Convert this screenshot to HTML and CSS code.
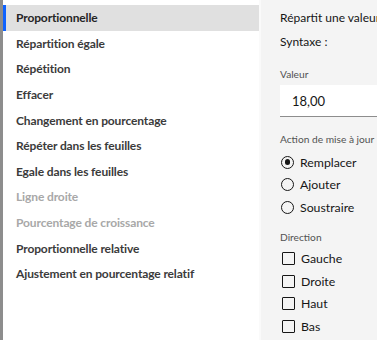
FILE: index.html
```html
<!DOCTYPE html>
<html lang="fr">
<head>
<meta charset="utf-8">
<link rel="stylesheet" href="styles.css">
</head>
<body>
<div class="app">
  <div class="edge"></div>
  <ul class="list">
    <li class="item selected">Proportionnelle</li>
    <li class="item">Répartition égale</li>
    <li class="item">Répétition</li>
    <li class="item">Effacer</li>
    <li class="item">Changement en pourcentage</li>
    <li class="item">Répéter dans les feuilles</li>
    <li class="item">Egale dans les feuilles</li>
    <li class="item disabled">Ligne droite</li>
    <li class="item disabled">Pourcentage de croissance</li>
    <li class="item">Proportionnelle relative</li>
    <li class="item">Ajustement en pourcentage relatif</li>
  </ul>
  <div class="panel">
    <p class="desc">Répartit une valeur proportionnellement</p>
    <p class="desc syntax">Syntaxe :</p>
    <div class="field">
      <div class="label">Valeur</div>
      <div class="input">18,00</div>
    </div>
    <div class="group">
      <div class="label">Action de mise à jour</div>
      <div class="opt"><span class="radio checked"></span>Remplacer</div>
      <div class="opt"><span class="radio"></span>Ajouter</div>
      <div class="opt"><span class="radio"></span>Soustraire</div>
    </div>
    <div class="group dir">
      <div class="label">Direction</div>
      <div class="opt"><span class="check"></span>Gauche</div>
      <div class="opt"><span class="check"></span>Droite</div>
      <div class="opt"><span class="check"></span>Haut</div>
      <div class="opt"><span class="check"></span>Bas</div>
    </div>
  </div>
</div>
</body>
</html>
```
FILE: styles.css
```css
html, body {
  margin: 0;
  padding: 0;
  width: 377px;
  height: 340px;
  overflow: hidden;
  background: #ffffff;
  font-family: Lato, "Noto Sans", sans-serif;
}
.app {
  display: flex;
  height: 340px;
}
.edge {
  width: 3px;
  background: #8d8d8d;
  flex: none;
}
.list {
  list-style: none;
  margin: 0;
  padding: 5px 0 0 0;
  width: 256px;
  flex: none;
  border-right: 2px solid #fafafa;
}
.item {
  height: 25.6px;
  display: flex;
  align-items: center;
  padding-left: 13px;
  font-size: 12px;
  letter-spacing: -0.12px;
  font-weight: 700;
  color: #3b3b3b;
  white-space: nowrap;
  box-sizing: border-box;
}
.item.selected {
  background: #e0e0e0;
  border-left: 3px solid #0f62fe;
  padding-left: 10px;
  color: #262626;
}
.item.disabled {
  color: #a8a8a8;
}
.panel {
  flex: 1;
  background: #f4f4f4;
  padding: 9px 0 0 19px;
  overflow: hidden;
  white-space: nowrap;
  color: #161616;
}
.desc {
  margin: 0;
  font-size: 12px;
  line-height: 18px;
}
.syntax {
  margin-top: 6px;
}
.label {
  font-size: 10.2px;
  color: #525252;
  line-height: 14px;
}
.field {
  margin-top: 16px;
}
.input {
  margin-top: 4px;
  height: 32px;
  background: #ffffff;
  border-bottom: 1px solid #8d8d8d;
  box-sizing: border-box;
  padding-left: 12px;
  display: flex;
  align-items: center;
  font-size: 13px;
  width: 120px;
}
.group {
  margin-top: 15px;
}
.group .label {
  margin-bottom: 5px;
}
.dir {
  margin-top: 11px;
}
.dir .label {
  margin-bottom: 4px;
}
.opt {
  display: flex;
  align-items: center;
  height: 22.5px;
  font-size: 12.3px;
  color: #161616;
}
.radio {
  width: 11px;
  height: 11px;
  border: 1.3px solid #161616;
  border-radius: 50%;
  margin: 0 6px 0 1px;
  position: relative;
  flex: none;
}
.radio.checked::after {
  content: "";
  position: absolute;
  left: 2.7px;
  top: 2.7px;
  width: 5.6px;
  height: 5.6px;
  border-radius: 50%;
  background: #161616;
}
.check {
  width: 11px;
  height: 11px;
  border: 1.3px solid #161616;
  border-radius: 1px;
  margin: 0 6px 0 2px;
  flex: none;
}
```
